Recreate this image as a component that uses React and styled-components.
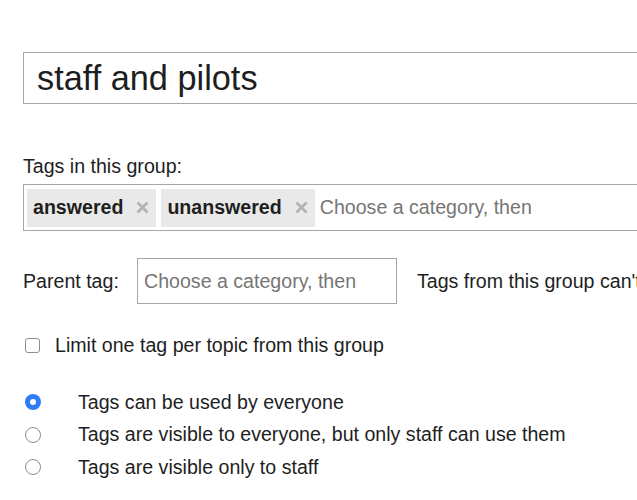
import React from "react";
import styled, { createGlobalStyle } from "styled-components";

const GlobalStyle = createGlobalStyle`
  body {
    margin: 0;
    overflow: hidden;
    background: #fff;
    font-family: "Liberation Sans", Arial, Helvetica, sans-serif;
    color: #1e1e1e;
  }
`;

const Page = styled.div`
  width: 760px;
  padding: 52px 0 0 23px;
  display: flex;
  flex-direction: column;
  font-size: 19.6px;
`;

const TitleField = styled.div`
  height: 50px;
  border: 1px solid #a6a6a6;
  display: flex;
  align-items: center;
  padding-left: 13px;
  font-size: 34.3px;
`;

const Label = styled.div`
  margin-top: 51px;
  line-height: 22px;
`;

const TagBox = styled.div`
  margin-top: 7px;
  height: 45px;
  border: 1px solid #a6a6a6;
  display: flex;
  align-items: center;
  padding-left: 3px;
  gap: 5px;
`;

const Chip = styled.div`
  flex-shrink: 0;
  height: 38px;
  background: #e9e9e9;
  display: flex;
  align-items: center;
  gap: 13px;
  padding: 0 7px 0 6px;
  font-weight: bold;
`;

const Remove = styled.svg`
  width: 13px;
  height: 13px;
  stroke: #b3b3b3;
  stroke-width: 2.6;
`;

const Placeholder = styled.span`
  color: #767676;
  white-space: nowrap;
`;

const ParentRow = styled.div`
  margin-top: 27px;
  display: flex;
  align-items: center;
`;

const ParentLabel = styled.span`
  flex-shrink: 0;
  width: 114px;
  white-space: nowrap;
`;

const ParentField = styled.div`
  flex-shrink: 0;
  width: 252px;
  height: 44px;
  border: 1px solid #a6a6a6;
  display: flex;
  align-items: center;
  padding-left: 6px;
  overflow: hidden;
`;

const Note = styled.span`
  flex-shrink: 0;
  margin-left: 20px;
  white-space: nowrap;
`;

const CheckRow = styled.label`
  margin-top: 29px;
  height: 24px;
  display: flex;
  align-items: center;
  padding-left: 2px;
  gap: 15px;
`;

const Box = styled.span`
  width: 13px;
  height: 13px;
  border: 1px solid #8c8c8c;
  border-radius: 3px;
  background: #fff;
`;

const RadioGroup = styled.div`
  margin-top: 29px;
  display: flex;
  flex-direction: column;
`;

const RadioRow = styled.label`
  height: 32.5px;
  display: flex;
  align-items: center;
  padding-left: 2px;
  gap: 37px;
`;

const Radio = styled.span`
  width: 16px;
  height: 16px;
  box-sizing: border-box;
  border-radius: 50%;
  border: ${(p) => (p.$on ? "none" : "1px solid #8c8c8c")};
  background: ${(p) => (p.$on ? "#2f7df6" : "#fff")};
  display: flex;
  align-items: center;
  justify-content: center;
  &::after {
    content: "";
    display: ${(p) => (p.$on ? "block" : "none")};
    width: 6px;
    height: 6px;
    border-radius: 50%;
    background: #fff;
  }
`;

const tags = ["answered", "unanswered"];

const options = [
  "Tags can be used by everyone",
  "Tags are visible to everyone, but only staff can use them",
  "Tags are visible only to staff",
];

export default function App() {
  return (
    <>
      <GlobalStyle />
      <Page>
        <TitleField>staff and pilots</TitleField>
        <Label>Tags in this group:</Label>
        <TagBox>
          {tags.map((t) => (
            <Chip key={t}>
              {t}
              <Remove viewBox="0 0 13 13">
                <line x1="1.5" y1="1.5" x2="11.5" y2="11.5" />
                <line x1="11.5" y1="1.5" x2="1.5" y2="11.5" />
              </Remove>
            </Chip>
          ))}
          <Placeholder>Choose a category, then</Placeholder>
        </TagBox>
        <ParentRow>
          <ParentLabel>Parent tag:</ParentLabel>
          <ParentField>
            <Placeholder>Choose a category, then</Placeholder>
          </ParentField>
          <Note>Tags from this group can't</Note>
        </ParentRow>
        <CheckRow>
          <Box />
          Limit one tag per topic from this group
        </CheckRow>
        <RadioGroup>
          {options.map((o, i) => (
            <RadioRow key={o}>
              <Radio $on={i === 0} />
              {o}
            </RadioRow>
          ))}
        </RadioGroup>
      </Page>
    </>
  );
}
